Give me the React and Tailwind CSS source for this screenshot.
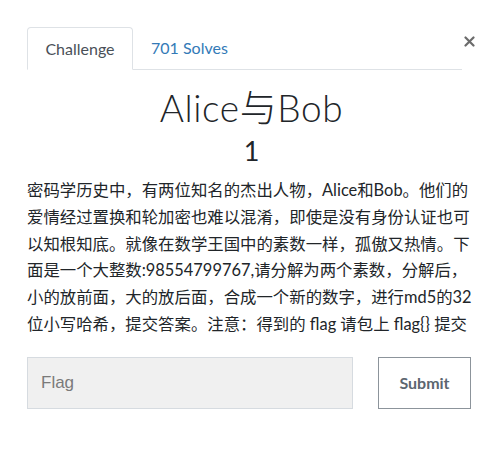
const description =
  "密码学历史中，有两位知名的杰出人物，Alice和Bob。他们的爱情经过置换和轮加密也难以混淆，即使是没有身份认证也可以知根知底。就像在数学王国中的素数一样，孤傲又热情。下面是一个大整数:98554799767,请分解为两个素数，分解后，小的放前面，大的放后面，合成一个新的数字，进行md5的32位小写哈希，提交答案。注意：得到的 flag 请包上 flag{} 提交";

export default function App() {
  return (
    <div className="min-h-screen w-full bg-white" style={{ fontFamily: "Lato, 'Noto Sans CJK SC', sans-serif" }}>
      <div className="px-[27px] pt-[27px]">
        {/* Tabs + close */}
        <div className="flex items-start">
          <div className="flex flex-1 border-b border-[#dee2e6]">
            <div className="-mb-px flex h-[43px] w-[106px] items-center justify-center rounded-t-[4px] border border-b-white border-[#dee2e6] bg-white text-[16px] text-[#495057]">
              Challenge
            </div>
            <div className="flex h-[42px] items-center px-[18px] text-[16px] text-[#337ab7]">
              701 Solves
            </div>
          </div>
          <button className="ml-[1px] mt-[8px] flex h-[12px] w-[13px] items-center justify-center text-[#6b6b6b]">
            <svg width="11" height="11" viewBox="0 0 11 11" fill="none" stroke="currentColor" strokeWidth="2.2" strokeLinecap="round">
              <path d="M1.5 1.5 L9.5 9.5 M9.5 1.5 L1.5 9.5" />
            </svg>
          </button>
        </div>

        {/* Title */}
        <div className="mt-[18px] text-center">
          <h1 className="text-[37px] font-light leading-[40px] tracking-[0.6px] text-[#212529]">Alice与Bob</h1>
          <div className="mt-[8px] text-[27px] font-normal leading-[30px] text-[#212529]">1</div>
        </div>

        {/* Description */}
        <p className="mt-[11px] w-[448px] text-[16.4px] leading-[26.8px] text-[#212529]">{description}</p>

        {/* Flag form */}
        <div className="mt-[19px] flex items-center">
          <input
            placeholder="Flag"
            className="h-[52px] w-[326px] border border-[#d6dbe0] bg-[#f0f0f0] px-[13px] text-[17px] text-[#495057] placeholder:text-[#7a7a7a] outline-none"
            style={{ fontFamily: "'Liberation Sans', Arial, sans-serif" }}
          />
          <button className="ml-[25px] h-[52px] w-[93px] border border-[#8c949b] bg-white text-[16px] font-bold text-[#5c6670]">
            Submit
          </button>
        </div>
      </div>
    </div>
  );
}
